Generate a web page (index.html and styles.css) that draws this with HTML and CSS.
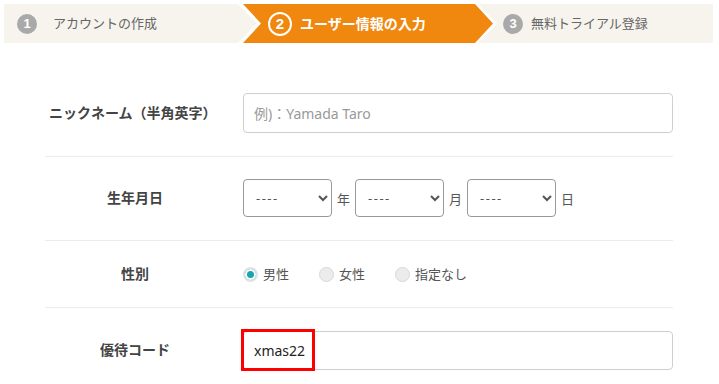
FILE: index.html
```html
<!DOCTYPE html>
<html lang="ja">
<head>
  <meta charset="UTF-8">
  <title>ユーザー情報の入力</title>
  <link rel="stylesheet" href="styles.css">
</head>
<body>
  <div class="steps">
    <div class="step step-first">
      <span class="num">1</span>
      <span class="step-text">アカウントの作成</span>
    </div>
    <div class="step step-current">
      <span class="num">2</span>
      <span class="step-text">ユーザー情報の入力</span>
    </div>
    <div class="step step-last">
      <span class="num">3</span>
      <span class="step-text">無料トライアル登録</span>
    </div>
  </div>

  <div class="form">
    <div class="row row-name">
      <label class="label">ニックネーム（半角英字）</label>
      <div class="value">
        <input type="text" class="text-input" placeholder="例)：Yamada Taro">
      </div>
    </div>

    <div class="row row-birth">
      <label class="label">生年月日</label>
      <div class="value">
        <select class="date-select"><option>----</option></select>
        <span class="unit">年</span>
        <select class="date-select"><option>----</option></select>
        <span class="unit">月</span>
        <select class="date-select"><option>----</option></select>
        <span class="unit">日</span>
      </div>
    </div>

    <div class="row row-gender">
      <label class="label">性別</label>
      <div class="value">
        <label class="radio"><input type="radio" name="gender" checked> 男性</label>
        <label class="radio"><input type="radio" name="gender"> 女性</label>
        <label class="radio"><input type="radio" name="gender"> 指定なし</label>
      </div>
    </div>

    <div class="row row-code">
      <label class="label">優待コード</label>
      <div class="value">
        <div class="code-wrap">
          <input type="text" class="text-input" value="xmas22">
          <div class="highlight"></div>
        </div>
      </div>
    </div>
  </div>
</body>
</html>
```

FILE: styles.css
```css
body {
  margin: 0;
  padding: 4px 6px 0 4px;
  background: #fff;
  color: #444;
  font-family: "Noto Sans", "Noto Sans CJK JP", sans-serif;
}

/* ステップバー */
.steps {
  display: flex;
  height: 39px;
}

.step {
  display: flex;
  align-items: center;
  background: #f7f4ee;
  color: #666;
  font-size: 13px;
  line-height: 1;
}

.step-first {
  width: 253px;
  padding-left: 13px;
  box-sizing: border-box;
  clip-path: polygon(0 0, 234px 0, 253px 50%, 234px 100%, 0 100%);
}

.step-current {
  width: 250px;
  margin-left: -14px;
  padding-left: 25px;
  box-sizing: border-box;
  background: #f0870f;
  color: #fff;
  font-size: 14px;
  font-weight: bold;
  clip-path: polygon(0 0, 232px 0, 250px 50%, 232px 100%, 0 100%, 18px 50%);
}

.step-last {
  flex: 1;
  margin-left: -15px;
  padding-left: 25px;
  clip-path: polygon(0 0, 100% 0, 100% 100%, 0 100%, 19px 50%);
}

.num {
  display: inline-flex;
  align-items: center;
  justify-content: center;
  width: 20px;
  height: 20px;
  border-radius: 50%;
  background: #a9a9a9;
  color: #fff;
  font-size: 13px;
  font-weight: bold;
  margin-right: 16px;
  font-family: "Liberation Sans", sans-serif;
}

.step-current .num {
  width: 20px;
  height: 20px;
  background: transparent;
  border: 2px solid #fff;
  font-size: 15px;
  margin-right: 8px;
}

.step-last .num {
  margin-right: 8px;
}

/* フォーム */
.form {
  width: 628px;
  margin: 28px 0 0 41px;
}

.row {
  display: grid;
  grid-template-columns: 180px 1fr;
  column-gap: 18px;
  align-items: center;
  padding: 22px 0 23px;
  border-bottom: 1px solid #ececec;
}

.row-birth {
  padding: 22px 0 23px;
}

.row-gender {
  padding: 25px 0 24px;
}

.row-code {
  border-bottom: none;
  padding-top: 23px;
}

.label {
  text-align: center;
  font-size: 14px;
  font-weight: bold;
  color: #444;
  line-height: 1.2;
}

.row-name .label {
  padding-left: 4px;
  text-align: left;
}

.value {
  display: flex;
  align-items: center;
}

.text-input {
  width: 100%;
  height: 40px;
  box-sizing: border-box;
  border: 1px solid #cfcfcf;
  border-radius: 4px;
  padding: 0 10px;
  font-size: 14px;
  font-family: "Noto Sans", "Noto Sans CJK JP", sans-serif;
  color: #222;
}

.text-input::placeholder {
  color: #999;
}

.row-code .text-input {
  height: 39px;
}

.date-select {
  width: 89px;
  height: 38px;
  border: 1px solid #999;
  border-radius: 4px;
  background: #fff;
  padding: 0 8px;
  font-size: 13px;
  letter-spacing: 1.5px;
  color: #555;
  font-family: "Noto Sans", "Noto Sans CJK JP", sans-serif;
}

.unit {
  font-size: 13px;
  color: #555;
  margin: 0 5px;
}

.radio {
  display: flex;
  align-items: center;
  font-size: 13px;
  color: #555;
  margin-right: 30px;
  line-height: 1;
}

.radio input {
  appearance: none;
  width: 15px;
  height: 15px;
  margin: 0 5px 0 0;
  border-radius: 50%;
  border: 1px solid #d8d8d8;
  background: #ececec;
}

.radio input:checked {
  background: #17a6b0;
  border: 2px solid #e2e2e2;
  box-shadow: inset 0 0 0 2px #fff;
}

.code-wrap {
  position: relative;
  width: 100%;
}

.highlight {
  position: absolute;
  left: -2px;
  top: -2px;
  width: 74px;
  height: 42px;
  box-sizing: border-box;
  border: 3px solid #f00;
}
```
